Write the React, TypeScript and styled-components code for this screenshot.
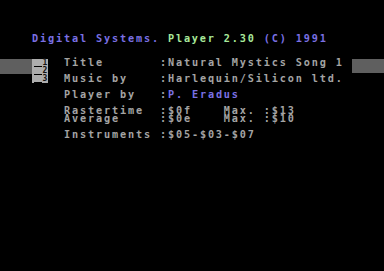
import React from "react";
import styled, { createGlobalStyle } from "styled-components";

const GlobalStyle = createGlobalStyle`
  html, body { margin: 0; padding: 0; background: #000; }
  body { width: 384px; height: 271px; overflow: hidden; }
`;

const palette = {
  blue: "#7a70e4",
  green: "#a8e89a",
  grey: "#a4a4a4",
  lightGrey: "#adadad",
  darkGrey: "#5f5f5f",
};

type Tone = keyof typeof palette;

const Frame = styled.div`
  width: 384px;
  height: 271px;
  background: #000;
  display: grid;
  grid-template-columns: 32px 320px 32px;
  grid-template-rows: 35px 24px 15px 1fr;
`;

const Screen = styled.div`
  grid-column: 2;
  grid-row: 2 / 5;
  display: flex;
  flex-direction: column;
`;

const BorderBar = styled.div<{ $side: "left" | "right" }>`
  grid-column: ${(p) => (p.$side === "left" ? 1 : 3)};
  grid-row: 3;
  height: ${(p) => (p.$side === "left" ? 15 : 14)}px;
  background: ${palette.darkGrey};
`;

const Line = styled.div`
  display: flex;
  height: 8px;
  line-height: 8px;
  font-family: "DejaVu Sans Mono", "Liberation Mono", monospace;
  font-weight: bold;
  font-size: 10.2px;
  letter-spacing: calc(8px - 0.602em);
  white-space: pre;
  color: ${palette.grey};
`;

const Text = styled.span<{ $tone?: Tone }>`
  color: ${(p) => palette[p.$tone ?? "grey"]};
`;

const IndexCell = styled.span`
  width: 16px;
  height: 8px;
  background: ${palette.lightGrey};
  display: flex;
  align-items: flex-end;
  flex-shrink: 0;
`;

const IndexRule = styled.span`
  width: 8px;
  height: 1px;
  margin-left: 2px;
  background: #000;
`;

const IndexDigit = styled.span`
  width: 6px;
  height: 8px;
  font-family: "DejaVu Sans Mono", monospace;
  font-weight: bold;
  font-size: 8px;
  line-height: 8px;
  letter-spacing: 0;
  color: #111;
  text-align: center;
`;

const Gap = styled.span<{ $cols: number }>`
  width: ${(p) => p.$cols * 8}px;
  flex-shrink: 0;
`;

const Index = ({ n }: { n: number }) => (
  <IndexCell>
    <IndexRule />
    <IndexDigit>{n}</IndexDigit>
  </IndexCell>
);

const Field = ({
  label,
  children,
  index,
}: {
  label: string;
  children?: React.ReactNode;
  index?: number;
}) => (
  <Line>
    {index ? <Index n={index} /> : <Gap $cols={2} />}
    <Gap $cols={2} />
    <Text>{label.padEnd(12, " ")}</Text>
    {children}
  </Line>
);

export default function App() {
  return (
    <>
      <GlobalStyle />
      <Frame>
        <BorderBar $side="left" />
        <Screen>
          <Line>
            <Text $tone="blue">Digital Systems. </Text>
            <Text $tone="green">Player 2.30</Text>
            <Text $tone="blue"> (C) 1991</Text>
          </Line>
          <Line />
          <Line />
          <Field label="Title" index={1}>
            <Text>:Natural Mystics Song 1</Text>
          </Field>
          <Line>
            <Index n={2} />
          </Line>
          <Field label="Music by" index={3}>
            <Text>:Harlequin/Silicon ltd.</Text>
          </Field>
          <Line />
          <Field label="Player by">
            <Text>:</Text>
            <Text $tone="blue">P. Eradus</Text>
          </Field>
          <Line />
          <Field label="Rastertime">
            <Text>{":$0f    Max. :$13"}</Text>
          </Field>
          <Field label="Average">
            <Text>{":$0e    Max. :$10"}</Text>
          </Field>
          <Line />
          <Field label="Instruments">
            <Text>:$05-$03-$07</Text>
          </Field>
        </Screen>
        <BorderBar $side="right" />
      </Frame>
    </>
  );
}
